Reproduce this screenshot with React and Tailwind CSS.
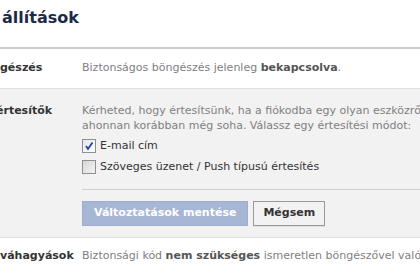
import React from 'react'

function Checkbox({ checked }) {
  return (
    <span
      className={
        'flex h-[14px] w-[14px] shrink-0 items-center justify-center border border-[#8f8f8f] bg-gradient-to-br ' +
        (checked ? 'from-[#e6e6e6] to-[#ffffff]' : 'from-[#d6d6d6] to-[#f4f4f4]')
      }
    >
      {checked && (
        <svg width="10" height="10" viewBox="0 0 10 10">
          <path d="M2 5 L4 8 L8.5 1.5" fill="none" stroke="#2142a8" strokeWidth="1.8" />
        </svg>
      )}
    </span>
  )
}

function App() {
  return (
    <div className="h-[280px] w-[420px] overflow-hidden bg-white font-['DejaVu_Sans',sans-serif] text-[11px] text-[#808080]">
      <h1 className="h-[47px] pl-[2px] pt-[8px] text-[16px] font-bold leading-[20px] text-[#1c2a47]">állítások</h1>
      <div className="h-[2px] bg-[#cccccc]" />

      {/* biztonságos böngészés */}
      <div className="flex h-[40px] items-center border-b border-[#e2e2e2]">
        <div className="w-[82px] shrink-0 font-bold text-[#333]">gészés</div>
        <div className="whitespace-nowrap">
          Biztonságos böngészés jelenleg <b className="text-[#555]">bekapcsolva</b>.
        </div>
      </div>

      {/* bejelentkezési értesítők */}
      <div className="flex h-[149px] bg-[#f2f2f2] pt-[14px] border-b border-[#e2e2e2]">
        <div className="w-[82px] shrink-0 overflow-hidden">
          <div className="ml-[-4px] whitespace-nowrap font-bold leading-[15px] text-[#333]">értesítők</div>
        </div>
        <div className="w-[360px] shrink-0">
          <p className="whitespace-nowrap leading-[15px]">
            Kérheted, hogy értesítsünk, ha a fiókodba egy olyan eszközről lépnek be,
            <br />
            ahonnan korábban még soha. Válassz egy értesítési módot:
          </p>
          <div className="mt-[6px] flex flex-col gap-[7px] text-[#333]">
            <label className="flex h-[14px] items-center gap-[4px]">
              <Checkbox checked />
              <span>E-mail cím</span>
            </label>
            <label className="flex h-[14px] items-center gap-[4px]">
              <Checkbox />
              <span>Szöveges üzenet / Push típusú értesítés</span>
            </label>
          </div>
          <div className="mt-[15px] h-px bg-[#cfcfcf]" />
          <div className="mt-[11px] flex gap-[5px]">
            <button className="h-[25px] border border-[#9eadcc] bg-[#a8b6d5] px-[11px] font-bold text-white">
              Változtatások mentése
            </button>
            <button className="h-[25px] border border-[#999] bg-[#f2f2f2] px-[9px] font-bold text-[#333] shadow-[0_1px_0_#e0e0e0]">
              Mégsem
            </button>
          </div>
        </div>
      </div>

      {/* bejelentkezési jóváhagyások */}
      <div className="flex pt-[10px]">
        <div className="w-[82px] shrink-0 whitespace-nowrap font-bold leading-[15px] text-[#333]">váhagyások</div>
        <div className="whitespace-nowrap leading-[15px]">
          Biztonsági kód <b className="text-[#555]">nem szükséges</b> ismeretlen böngészővel való
        </div>
      </div>
    </div>
  )
}

export default App
